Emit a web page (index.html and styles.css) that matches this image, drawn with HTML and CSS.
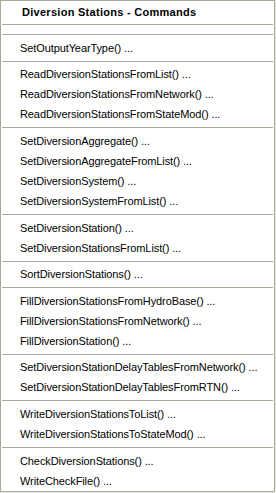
FILE: index.html
```html
<!DOCTYPE html>
<html lang="en">
<head>
    <meta charset="UTF-8">
    <meta name="viewport" content="width=device-width, initial-scale=1.0">
    <title>Diversion Stations - Commands</title>
    <link rel="stylesheet" href="styles.css">
</head>
<body>
    <div class="menu">
        <div class="menu-title">Diversion Stations - Commands</div>
        <div class="gap"></div>
        <div class="sep"></div>

        <div class="item">SetOutputYearType() ...</div>
        <div class="sep"></div>

        <div class="item">ReadDiversionStationsFromList() ...</div>
        <div class="item">ReadDiversionStationsFromNetwork() ...</div>
        <div class="item">ReadDiversionStationsFromStateMod() ...</div>
        <div class="sep"></div>

        <div class="item">SetDiversionAggregate() ...</div>
        <div class="item">SetDiversionAggregateFromList() ...</div>
        <div class="item">SetDiversionSystem() ...</div>
        <div class="item">SetDiversionSystemFromList() ...</div>
        <div class="sep"></div>

        <div class="item">SetDiversionStation() ...</div>
        <div class="item">SetDiversionStationsFromList() ...</div>
        <div class="sep"></div>

        <div class="item">SortDiversionStations() ...</div>
        <div class="sep"></div>

        <div class="item">FillDiversionStationsFromHydroBase() ...</div>
        <div class="item">FillDiversionStationsFromNetwork() ...</div>
        <div class="item">FillDiversionStation() ...</div>
        <div class="sep"></div>

        <div class="item">SetDiversionStationDelayTablesFromNetwork() ...</div>
        <div class="item">SetDiversionStationDelayTablesFromRTN() ...</div>
        <div class="sep"></div>

        <div class="item">WriteDiversionStationsToList() ...</div>
        <div class="item">WriteDiversionStationsToStateMod() ...</div>
        <div class="sep"></div>

        <div class="item">CheckDiversionStations() ...</div>
        <div class="item">WriteCheckFile() ...</div>
    </div>
</body>
</html>
```

FILE: styles.css
```css
html, body {
    margin: 0;
    padding: 0;
}
body {
    background: #eeede5;
    font-family: "Liberation Sans", Arial, sans-serif;
    font-size: 11px;
    color: #000;
    overflow: hidden;
}
.menu {
    width: 273px;
    background: #fff;
    border: 1px solid #aca899;
}
.menu-title {
    height: 23px;
    line-height: 22px;
    padding-left: 20px;
    font-weight: bold;
    letter-spacing: 0.28px;
    border-bottom: 1px solid #aca899;
    margin: 0 1px;
}
.gap {
    height: 6px;
}
.sep {
    margin: 3px 1px 2.625px;
    border-top: 1px solid #aca899;
}
.item {
    height: 20px;
    line-height: 20px;
    padding-left: 19px;
    letter-spacing: -0.1px;
    white-space: nowrap;
}
```
